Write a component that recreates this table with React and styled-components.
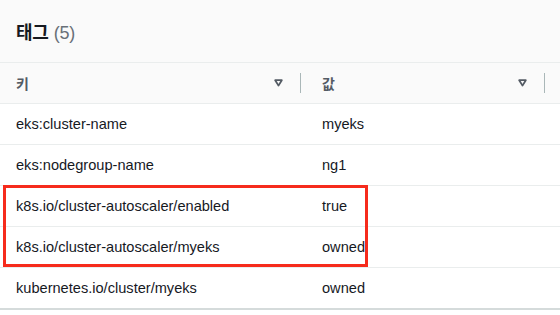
import React from 'react';
import styled, { createGlobalStyle } from 'styled-components';

const GlobalStyle = createGlobalStyle`
    html, body {
        margin: 0;
        padding: 0;
        background: #ffffff;
    }
    body {
        font-family: "Liberation Sans", "Noto Sans CJK KR", sans-serif;
        color: #16191f;
    }
`;

const Panel = styled.section`
    width: 560px;
    height: 315px;
    overflow: hidden;
    background: #ffffff;
`;

const Header = styled.header`
    height: 62px;
    display: flex;
    align-items: center;
    padding-left: 16px;
    background: #fafafa;
    border-bottom: 1px solid #eaeded;
`;

const Title = styled.h2`
    margin: 0;
    font-size: 18px;
    font-weight: 700;
    color: #16191f;
    letter-spacing: -0.2px;
`;

const Count = styled.span`
    font-weight: 400;
    color: #687078;
    margin-left: 5px;
`;

const Table = styled.div`
    position: relative;
    display: grid;
    grid-template-columns: 301px 1fr;
`;

const HeadCell = styled.div`
    height: 40px;
    display: flex;
    align-items: center;
    padding-left: ${p => p.$padLeft}px;
    padding-right: ${p => p.$padRight}px;
    background: #fafafa;
    border-bottom: 1px solid #eaeded;
    font-size: 14px;
    font-weight: 700;
    color: #545b64;
`;

const SortIcon = styled.svg`
    margin-left: auto;
    width: 9px;
    height: 8px;
`;

const Divider = styled.span`
    margin-left: 17px;
    width: 1px;
    height: 20px;
    background: #aab7b8;
`;

const Cell = styled.div`
    height: 40px;
    display: flex;
    align-items: center;
    padding-left: ${p => p.$padLeft}px;
    font-size: 14.6px;
    color: #16191f;
    border-bottom: ${p => (p.$last ? '2px solid #d5dbdb' : '1px solid #eaeded')};
`;

const Highlight = styled.div`
    position: absolute;
    left: 3px;
    top: 122px;
    width: 365px;
    height: 82px;
    box-sizing: border-box;
    border: 3px solid #f62b1c;
    pointer-events: none;
`;

const Caret = () => (
    <SortIcon viewBox="0 0 9 8">
        <polygon points="1.2,1.2 7.8,1.2 4.5,6.6" fill="none" stroke="#545b64" strokeWidth="1.8" strokeLinejoin="round" />
    </SortIcon>
);

const tags = [
    ['eks:cluster-name', 'myeks'],
    ['eks:nodegroup-name', 'ng1'],
    ['k8s.io/cluster-autoscaler/enabled', 'true'],
    ['k8s.io/cluster-autoscaler/myeks', 'owned'],
    ['kubernetes.io/cluster/myeks', 'owned'],
];

export default function App() {
    return (
        <>
            <GlobalStyle />
            <Panel>
                <Header>
                    <Title>태그<Count>(5)</Count></Title>
                </Header>
                <Table>
                    <HeadCell $padLeft={16} $padRight={0}>
                        키
                        <Caret />
                        <Divider />
                    </HeadCell>
                    <HeadCell $padLeft={21} $padRight={15}>
                        값
                        <Caret />
                        <Divider />
                    </HeadCell>
                    {tags.map(([key, value], i) => (
                        <React.Fragment key={key}>
                            <Cell $padLeft={16} $last={i === tags.length - 1}>{key}</Cell>
                            <Cell $padLeft={21} $last={i === tags.length - 1}>{value}</Cell>
                        </React.Fragment>
                    ))}
                    <Highlight />
                </Table>
            </Panel>
        </>
    );
}
